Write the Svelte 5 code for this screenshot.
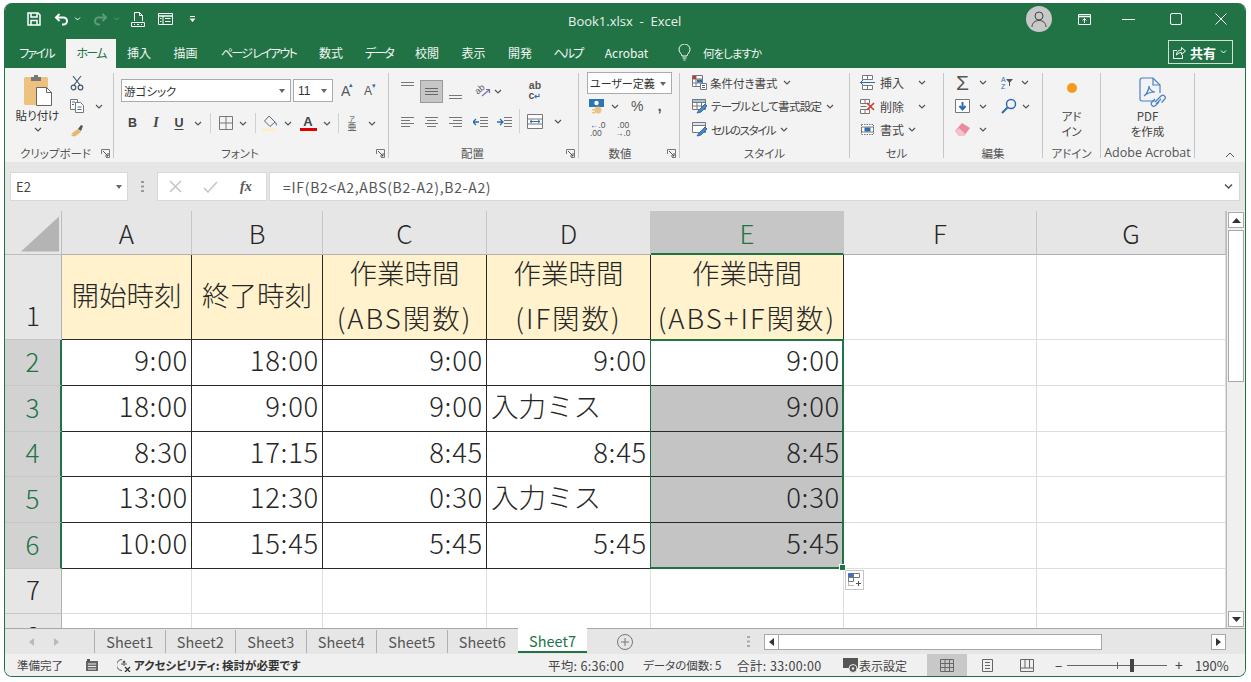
<script>
  const tabs = [
    ['ファイル', 59, true], ['ホーム', 50, true], ['挿入', 46], ['描画', 47], ['ページ レイアウト', 99, true], ['数式', 46],
    ['データ', 50, true], ['校閲', 46], ['表示', 47], ['開発', 46], ['ヘルプ', 50, true], ['Acrobat', 67]
  ];
  const columns = ['A', 'B', 'C', 'D', 'E', 'F', 'G'];
  const rows = [
    ['9:00', '18:00', '9:00', '9:00', '9:00'],
    ['18:00', '9:00', '9:00', '入力ミス', '9:00'],
    ['8:30', '17:15', '8:45', '8:45', '8:45'],
    ['13:00', '12:30', '0:30', '入力ミス', '0:30'],
    ['10:00', '15:45', '5:45', '5:45', '5:45']
  ];
  const sheets = ['Sheet1', 'Sheet2', 'Sheet3', 'Sheet4', 'Sheet5', 'Sheet6', 'Sheet7'];
</script>

{#snippet chev()}
  <svg class="chev" width="8" height="5" viewBox="0 0 8 5"><path d="M1 1l3 3 3-3" fill="none" stroke="#555" stroke-width="1.2"/></svg>
{/snippet}

{#snippet launcher()}
  <svg class="launch" width="9" height="9" viewBox="0 0 9 9"><path d="M.5 5V.5h8v8H5" fill="none" stroke="#777"/><path d="M2 2l5 5M7 4v3H4" fill="none" stroke="#555"/></svg>
{/snippet}

{#snippet lines(kind)}
  <svg width="15" height="11" viewBox="0 0 15 11" fill="none" stroke="#777">
    {#if kind === 'left'}<path d="M1 1.500h13M1 4.500h9M1 7.500h13M1 10.500h9"/>
    {:else if kind === 'center'}<path d="M1 1.500h13M3 4.500h9M1 7.500h13M3 10.500h9"/>
    {:else}<path d="M1 1.500h13M5 4.500h9M1 7.500h13M5 10.500h9"/>{/if}
  </svg>
{/snippet}

<div class="window">
  <header class="titlebar">
    <div class="qat">
      <svg width="14" height="14" viewBox="0 0 14 14" fill="none" stroke="#fff" stroke-width="1.500"><path d="M1 1h10l2 2v10H1z"/><path d="M4 1v4h6V1M4 13V8.500h6V13"/></svg>
      <svg class="undo" width="15" height="13" viewBox="0 0 15 13" fill="none" stroke="#fff" stroke-width="2"><path d="M5.500 1L2 4.500 5.500 8"/><path d="M2 4.500h7.500a3.500 3.500 0 0 1 0 7H8"/></svg>
      <svg class="c1" width="7" height="4" viewBox="0 0 7 4"><path d="M1 .5l2.500 2.500L6 .5" fill="none" stroke="#fff"/></svg>
      <svg class="redo" width="15" height="13" viewBox="0 0 15 13" fill="none" stroke="#5f9a7b" stroke-width="2"><path d="M9.500 1L13 4.500 9.500 8"/><path d="M13 4.500H5.500a3.500 3.500 0 0 0 0 7H7"/></svg>
      <svg class="c2" width="7" height="4" viewBox="0 0 7 4"><path d="M1 .5l2.500 2.500L6 .5" fill="none" stroke="#5f9a7b"/></svg>
      <svg class="prev" width="14" height="15" viewBox="0 0 14 15" fill="none" stroke="#fff"><path d="M3.500 9V.5h5l3 3V9M8.500.5v3h3"/><path d="M.5 10.500h13v4H.5z"/><path d="M3 12.500h1M6 12.500h2M10 12.500h1"/></svg>
      <svg class="form" width="15" height="12" viewBox="0 0 15 12" fill="none" stroke="#fff"><path d="M.5.500h14v11H.5z"/><path d="M.5 3h14" stroke-width="1.500"/><path d="M5 3v8.500M7 5.500h5.500M7 8.500h5.500M2 5.500h1.500M2 8.500h1.500"/></svg>
      <svg class="more" width="7" height="6" viewBox="0 0 7 6" fill="#fff"><path d="M1 0h5v1H1zM.5 2.500h6L3.500 6z"/></svg>
    </div>
    <div class="doc">Book1.xlsx&nbsp; - &nbsp;Excel</div>
    <div class="controls">
      <span class="avatar"><svg width="18" height="18" viewBox="0 0 18 18" fill="none" stroke="#444"><circle cx="9" cy="6" r="4"/><path d="M2 17c0-4 3-6.500 7-6.500s7 2.500 7 6.500"/></svg></span>
      <svg class="rd" width="13" height="11" viewBox="0 0 13 11" fill="none" stroke="#fff"><path d="M.5.500h12v10H.5z"/><path d="M.5 2.500h12" stroke-width="1.500"/><path d="M6.500 9V4.500M4.500 6.500l2-2 2 2"/></svg>
      <svg class="mn" width="13" height="1" viewBox="0 0 13 1"><path d="M0 .5h13" stroke="#fff"/></svg>
      <svg class="mx" width="12" height="12" viewBox="0 0 12 12"><rect x=".5" y=".5" width="11" height="11" rx="1.500" fill="none" stroke="#fff"/></svg>
      <svg class="cl" width="12" height="12" viewBox="0 0 12 12"><path d="M.5.500l11 11M11.500.500l-11 11" stroke="#fff"/></svg>
    </div>
  </header>

  <nav class="tabbar">
    {#each tabs as [name, width, kana], i}
      <span class="tab" class:active={i === 1} class:kana style="width:{width}px">{name}</span>
    {/each}
    <svg class="bulb" width="13" height="17" viewBox="0 0 13 17" fill="none" stroke="#fff"><path d="M4 12c0-2-3-3.500-3-6.500a5.500 5.500 0 0 1 11 0c0 3-3 4.500-3 6.500zM4.500 14h4M5.500 16h2"/></svg>
    <span class="tell">何をしますか</span>
    <button class="share">
      <svg width="13" height="13" viewBox="0 0 13 13" fill="none" stroke="#fff"><path d="M4 4.500H.5v8h9V9"/><path d="M3.500 9c0-3 2-5 5-5V1.500l4 3.500-4 3.500V6.500c-2 0-3.500 1-5 2.500z"/></svg>
      <b>共有</b>
      <svg width="7" height="4" viewBox="0 0 7 4"><path d="M1 .5l2.500 2.500L6 .5" fill="none" stroke="#fff"/></svg>
    </button>
  </nav>

  <section class="ribbon">
    <div class="group g-clip">
      <div class="body clip">
        <div class="paste">
          <svg width="30" height="32" viewBox="0 0 30 32"><rect x="1" y="3" width="24" height="28" rx="1.500" fill="#ecc27e"/><path d="M8 3h10v4H8z" fill="#777"/><path d="M11 1h4v3h-4z" fill="#777"/><path d="M13.500 13.500h10l5 5v13h-15z" fill="#fff" stroke="#666"/><path d="M23.500 13.500v5h5" fill="none" stroke="#666"/></svg>
          <span class="plabel">貼り付け</span>
          {@render chev()}
        </div>
        <div class="clipside">
          <svg width="14" height="16" viewBox="0 0 14 16" fill="none" stroke="#46586c" stroke-width="1.200"><path d="M3 1l7 9M11 1L4 10"/><circle cx="3.500" cy="12.500" r="2.300"/><circle cx="10.500" cy="12.500" r="2.300"/></svg>
          <span class="copyrow">
            <svg width="14" height="14" viewBox="0 0 14 14" fill="#fff" stroke="#777"><path d="M.5.500h7v10h-7z"/><path d="M5.500 3.500h5l3 3v7h-8z"/><path d="M2 3h3M2 5.500h2M7.500 8h4M7.500 10.500h4" stroke="#3f6ea6"/></svg>
            {@render chev()}
          </span>
          <svg width="14" height="14" viewBox="0 0 14 14"><path d="M8 6l3 3-2 1.500-4 3L1 13l2-2-2 .5 3-3z" fill="#e6b96f"/><path d="M8 6l3-4 2 1-2 5z" fill="#555"/></svg>
        </div>
      </div>
      <div class="label"><span>クリップボード</span>{@render launcher()}</div>
    </div>

    <div class="group g-font">
      <div class="body fontbody">
        <div class="frow1">
          <span class="select fname">游ゴシック<i class="dn"></i></span>
          <span class="select fsize">11<i class="dn"></i></span>
          <span class="growa">A<sup>▴</sup></span>
          <span class="growa small">A<sup>▾</sup></span>
        </div>
        <div class="frow2">
          <b class="bt">B</b><b class="bt it">I</b><b class="bt un">U</b>{@render chev()}
          <i class="vd"></i>
          <svg width="14" height="14" viewBox="0 0 14 14" fill="none" stroke="#777"><path d="M.5.500h13v13H.5zM7 .5v13M.5 7h13"/></svg>{@render chev()}
          <i class="vd"></i>
          <svg width="16" height="16" viewBox="0 0 16 16" fill="none"><path d="M7 1l6 6-5 4.500L2.500 6z" stroke="#666"/><path d="M13 7c1 1.500 2 2.500 1.500 3.500" stroke="#5a8fc2" stroke-width="1.300"/><path d="M0 13.500h15v2.500H0z" fill="#fdeec6"/></svg>{@render chev()}
          <span class="fontcolor">A</span>{@render chev()}
          <i class="vd"></i>
          <span class="zhu"><small>ア</small><span>亜</span></span>{@render chev()}
        </div>
      </div>
      <div class="label"><span>フォント</span>{@render launcher()}</div>
    </div>

    <div class="group g-align">
      <div class="body alignbody">
        <div class="arow1">
          <svg width="15" height="6" viewBox="0 0 15 6" class="at"><path d="M1 .5h13M1 3.500h13" stroke="#777"/></svg>
          <span class="pressed"><svg width="15" height="9" viewBox="0 0 15 9"><path d="M1 1.500h13M1 4.500h13M1 7.500h13" stroke="#666"/></svg></span>
          <svg width="15" height="6" viewBox="0 0 15 6" class="ab"><path d="M1 1.500h13M1 4.500h13" stroke="#777"/></svg>
          <span></span>
          <span class="orient"><span class="tilt">ab</span><svg width="15" height="14" viewBox="0 0 15 14" fill="none"><path d="M6 12l7-6M10 5.500h3.500V9" stroke="#7a68b5" stroke-width="1.200"/></svg></span>
          {@render chev()}
          <span></span>
          <span class="wrap"><span>ab</span><span>c<em>↵</em></span></span>
        </div>
        <div class="arow2">
          {@render lines('left')}{@render lines('center')}{@render lines('right')}
          <svg width="15" height="11" viewBox="0 0 15 11" fill="none"><path d="M7 1.500h8M7 4.500h8M7 7.500h8M7 10.500h8" stroke="#777"/><path d="M6 6H0M3 3L0 6l3 3" stroke="#2d6cb0" stroke-width="1.300"/></svg>
          <svg width="15" height="11" viewBox="0 0 15 11" fill="none"><path d="M7 1.500h8M7 4.500h8M7 7.500h8M7 10.500h8" stroke="#777"/><path d="M0 6h6M3 3l3 3-3 3" stroke="#2d6cb0" stroke-width="1.300"/></svg>
          <i class="vd tall"></i>
          <svg width="16" height="15" viewBox="0 0 16 15" fill="#fff" stroke="#777"><path d="M.5.500h15v14H.5z"/><path d="M.5 5h15M.5 10h15" /><path d="M3 7.500h10M5 5.800L3 7.500l2 1.700M11 5.800l2 1.700-2 1.700" stroke="#2d6cb0" fill="none"/></svg>
          {@render chev()}
        </div>
      </div>
      <div class="label"><span>配置</span>{@render launcher()}</div>
    </div>

    <div class="group g-num">
      <div class="body numbody">
        <span class="select numsel">ユーザー定義<i class="dn"></i></span>
        <div class="nrow">
          <svg width="17" height="15" viewBox="0 0 17 15"><path d="M0 0h15v8H0z" fill="#2e75b6"/><circle cx="7.500" cy="4" r="2.200" fill="#fff"/><circle cx="9" cy="11" r="3.500" fill="#ecc27e"/><path d="M3 10h3v1.500H3zM3 13h3v1.500H3z" fill="#ecc27e"/></svg>
          {@render chev()}
          <span class="pct">%</span>
          <b class="comma">,</b>
        </div>
        <div class="nrow2">
          <span class="dec"><em>←</em>.0<br/>.00</span>
          <span class="dec">&nbsp;.00<br/><em>→</em>.0</span>
        </div>
      </div>
      <div class="label"><span>数値</span>{@render launcher()}</div>
    </div>

    <div class="group g-style">
      <div class="body stack">
        <div class="line">
          <svg width="15" height="15" viewBox="0 0 15 15" fill="#fff" stroke="#777"><path d="M.5.500h10v11H.5zM.5 4h10M.5 8h10M4 .5v11"/><path d="M1 1h3v3H1z" fill="#c0392b" stroke="none"/><path d="M5 4.500h5v3H5z" fill="#2d6cb0" stroke="none"/><path d="M8.500 8.500h6v6h-6z"/><path d="M10 10.500h3M10 12.500h3" stroke="#2d6cb0"/></svg>
          <span>条件付き書式</span>{@render chev()}
        </div>
        <div class="line">
          <svg width="16" height="15" viewBox="0 0 16 15" fill="#fff" stroke="#777"><path d="M.5.500h13v10H.5zM.5 3.500h13M.5 7h13M5 3.500v7M9.500 3.500v7"/><path d="M.5.500h13v3H.5z" fill="#9dc3e6" stroke="#777"/><path d="M5 14l2-3 6-6 2 2-6 6z" fill="#4a8acb" stroke="#2d6cb0"/></svg>
          <span class="t1">テーブルとして書式設定</span>{@render chev()}
        </div>
        <div class="line">
          <svg width="16" height="15" viewBox="0 0 16 15" fill="#fff" stroke="#777"><path d="M.5.500h13v10H.5z"/><path d="M.5.500h13v3H.5z" fill="#d9e5f3"/><path d="M5 14l2-3 6-6 2 2-6 6z" fill="#4a8acb" stroke="#2d6cb0"/></svg>
          <span class="t2">セルのスタイル</span>{@render chev()}
        </div>
      </div>
      <div class="label center"><span>スタイル</span></div>
    </div>

    <div class="group g-cell">
      <div class="body stack">
        <div class="line">
          <svg width="15" height="15" viewBox="0 0 15 15" fill="#fff" stroke="#777"><path d="M2.500.5h10v4h-10zM2.500 10.500h10v4h-10zM7.500.5v4M7.500 10.500v4"/><path d="M6 7.500h9" stroke="#2d6cb0"/><path d="M0 7.500h6M3 5L.5 7.500 3 10" stroke="#2d6cb0" fill="none"/></svg>
          <span>挿入</span><span class="push">{@render chev()}</span>
        </div>
        <div class="line">
          <svg width="15" height="15" viewBox="0 0 15 15" fill="#fff" stroke="#777"><path d="M.5.500h9v4h-9zM.5 10.500h9v4h-9zM5 .5v4M5 10.500v4M.5 7.500h6"/><path d="M7 4l7 7M14 4l-7 7" stroke="#d1382c" stroke-width="1.600"/></svg>
          <span>削除</span><span class="push">{@render chev()}</span>
        </div>
        <div class="line">
          <svg width="15" height="15" viewBox="0 0 15 15" fill="#fff" stroke="#777"><path d="M1.500 2.500h12v10h-12z" stroke-dasharray="1.500 1"/><path d="M1.500 5h12v5h-12z" /><path d="M4.500 5.500h6v4h-6z" fill="#2d6cb0" stroke="none"/></svg>
          <span>書式</span>{@render chev()}
        </div>
      </div>
      <div class="label center"><span>セル</span></div>
    </div>

    <div class="group g-edit">
      <div class="body editbody">
        <div class="erow">
          <span class="sigma">Σ</span>{@render chev()}
          <span class="sort"><small>A<br/>Z</small><svg width="7" height="7" viewBox="0 0 7 7"><path d="M0 0h7L4 3.500V7H3V3.500z" fill="#555"/></svg></span>{@render chev()}
        </div>
        <div class="erow">
          <svg width="15" height="14" viewBox="0 0 15 14"><path d="M.5.500h14v13H.5z" fill="#fff" stroke="#777"/><path d="M7.500 3v7M4.500 7l3 3.500 3-3.500" fill="none" stroke="#2d6cb0" stroke-width="2"/></svg>{@render chev()}
          <svg class="lens" width="16" height="16" viewBox="0 0 16 16" fill="none" stroke="#2d6cb0" stroke-width="1.500"><circle cx="10" cy="6" r="4.500"/><path d="M6.500 9.500L1 15" stroke-width="2"/></svg>{@render chev()}
        </div>
        <div class="erow">
          <svg width="15" height="13" viewBox="0 0 15 13"><path d="M0 8l7-8 8 5-6 8H4z" fill="#e98b9c"/><path d="M0 8l4 5h5l1.500-2L4 5z" fill="#f5c1cb"/></svg>{@render chev()}
        </div>
      </div>
      <div class="label center"><span>編集</span></div>
    </div>

    <div class="group g-addin">
      <div class="body big">
        <svg class="dot" width="12" height="12" viewBox="0 0 12 12"><circle cx="6" cy="6" r="5" fill="#f59a1f"/></svg>
        <span class="bigt">アド<br/>イン</span>
      </div>
      <div class="label center"><span>アドイン</span></div>
    </div>

    <div class="group g-acro">
      <div class="body big">
        <svg class="pdf" width="28" height="33" viewBox="0 0 28 33" fill="none" stroke="#4a7fc9" stroke-width="1.200"><path d="M17 24H4a2 2 0 0 1-2-2V3a2 2 0 0 1 2-2h11l7 7v8"/><path d="M15 1v7h7"/><path d="M6 19c3-2 5-7 5-10 0 3 3 6 6 6-3 0-8 1-11 4z"/><path d="M17 25l6-6a2.400 2.400 0 0 1 3.500 3.500l-3 3M21 25l-3.500 3.500A2.400 2.400 0 0 1 14 25l3-3M18 27l5-5"/></svg>
        <span class="bigt">PDF<br/>を作成</span>
      </div>
      <div class="label center"><span class="acro">Adobe Acrobat</span></div>
    </div>

    <div class="collapse">
      <svg width="10" height="6" viewBox="0 0 10 6"><path d="M1 5l4-4 4 4" fill="none" stroke="#555"/></svg>
    </div>
  </section>

  <section class="formula">
    <div class="namebox"><span>E2</span><i class="dn"></i></div>
    <svg class="grip" width="3" height="11" viewBox="0 0 3 11" fill="#999"><path d="M0 0h3v2H0zM0 4.500h3v2H0zM0 9h3v2H0z"/></svg>
    <div class="fxbox">
      <svg width="13" height="13" viewBox="0 0 13 13"><path d="M1 1l11 11M12 1L1 12" stroke="#c4c4c4" stroke-width="1.500"/></svg>
      <svg width="15" height="12" viewBox="0 0 15 12"><path d="M1 7l4 4 9-10" fill="none" stroke="#c4c4c4" stroke-width="1.500"/></svg>
      <span class="fx">fx</span>
    </div>
    <div class="fbar">
      <span>=IF(B2&lt;A2,ABS(B2-A2),B2-A2)</span>
      <svg width="9" height="5" viewBox="0 0 9 5"><path d="M1 .5l3.500 3.500L8 .5" fill="none" stroke="#555" stroke-width="1.500"/></svg>
    </div>
  </section>

  <main class="sheetarea">
    <div class="sheet">
      <div class="grid">
        <div class="corner"><svg width="41" height="38" viewBox="0 0 41 38"><path d="M41 0v38H0z" fill="#b4b4b4"/></svg></div>
        {#each columns as col, c}
          <div class="colhead" class:sel={c === 4}>{col}</div>
        {/each}

        <div class="rowhead r1">1</div>
        <div class="cell head">開始時刻</div>
        <div class="cell head">終了時刻</div>
        <div class="cell head two"><span>作業時間</span><span class="sub">(ABS関数)</span></div>
        <div class="cell head two"><span>作業時間</span><span class="sub">(IF関数)</span></div>
        <div class="cell head two"><span>作業時間</span><span class="sub">(ABS+IF関数)</span></div>
        <div class="cell"></div>
        <div class="cell"></div>

        {#each rows as row, r}
          <div class="rowhead sel">{r + 2}</div>
          {#each row as value, c}
            <div class="cell table" class:text={value === '入力ミス'} class:filled={c === 4 && r > 0}>{value}</div>
          {/each}
          <div class="cell"></div>
          <div class="cell"></div>
        {/each}

        {#each [7, 8] as n}
          <div class="rowhead">{n}</div>
          {#each columns as col}
            <div class="cell"></div>
          {/each}
        {/each}
      </div>
      <div class="selection"><i class="handle"></i></div>
      <div class="autofill">
        <svg width="14" height="14" viewBox="0 0 14 14" fill="none" stroke="#777"><path d="M.5.500h5v4h-5z" fill="#3f72c4" stroke="#3f72c4"/><path d="M5.500.5h6v4h-6zM.5 4.500h5v4h-5z"/><path d="M.5 8.500v4h6" stroke-dasharray="1 1"/><path d="M10.500 8v5M8 10.500h5" stroke="#555"/></svg>
      </div>
    </div>
    <div class="vscroll">
      <span class="sbtn"><svg width="9" height="5" viewBox="0 0 9 5"><path d="M0 5l4.500-5L9 5z" fill="#333"/></svg></span>
      <span class="vthumb"></span>
      <span class="sbtn end"><svg width="9" height="5" viewBox="0 0 9 5"><path d="M0 0l4.500 5L9 0z" fill="#333"/></svg></span>
    </div>
  </main>

  <section class="sheetbar">
    <div class="nav">
      <svg width="5" height="8" viewBox="0 0 5 8"><path d="M5 0L0 4l5 4z" fill="#b9b9b9"/></svg>
      <svg width="5" height="8" viewBox="0 0 5 8"><path d="M0 0l5 4-5 4z" fill="#b9b9b9"/></svg>
    </div>
    <div class="sheets">
      {#each sheets as s, i}
        <span class="stab" class:current={i === 6}>{s}</span>
      {/each}
    </div>
    <svg class="plus" width="16" height="16" viewBox="0 0 16 16" fill="none" stroke="#777"><circle cx="8" cy="8" r="7.500"/><path d="M8 4v8M4 8h8"/></svg>
    <svg class="grip2" width="3" height="11" viewBox="0 0 3 11" fill="#aaa"><path d="M0 0h3v2H0zM0 4.500h3v2H0zM0 9h3v2H0z"/></svg>
    <div class="hscroll">
      <span class="hbtn"><svg width="5" height="8" viewBox="0 0 5 8"><path d="M5 0L0 4l5 4z" fill="#333"/></svg></span>
      <span class="hthumb"></span>
      <span class="hbtn last"><svg width="5" height="8" viewBox="0 0 5 8"><path d="M0 0l5 4-5 4z" fill="#333"/></svg></span>
    </div>
  </section>

  <footer class="status">
    <span class="ready">準備完了</span>
    <svg class="macro" width="12" height="12" viewBox="0 0 12 12"><path d="M0 2h12v10H0z" fill="#666"/><path d="M2 4.500h8v1H2zM2 7h8v1H2zM2 9.500h8v1H2z" fill="#eee"/><path d="M1 0h3v3H1z" fill="#555"/></svg>
    <svg class="acc" width="14" height="14" viewBox="0 0 14 14" fill="none" stroke="#555"><path d="M5 1.500a5.500 5.500 0 0 0 0 11"/><circle cx="7" cy="4" r="1" fill="#555"/><path d="M4 6h6M7 6v2"/><path d="M8 9l5 5M13 9l-5 5" stroke="#333" stroke-width="1.300"/></svg>
    <b class="acctext">アクセシビリティ: 検討が必要です</b>
    <span class="avg">平均: 6:36:00</span>
    <span class="cnt">データの個数: 5</span>
    <span class="sum">合計: 33:00:00</span>
    <svg class="disp" width="16" height="15" viewBox="0 0 16 15"><path d="M0 0h15v10H0z" fill="#555"/><circle cx="10" cy="10.500" r="4" fill="#555" stroke="#eee"/><circle cx="10" cy="10.500" r="1.200" fill="#eee"/></svg>
    <span class="disptext">表示設定</span>
    <span class="view on"><svg width="14" height="13" viewBox="0 0 14 13" fill="none" stroke="#666"><path d="M.5.500h13v12H.5zM5 .5v12M9.500.5v12M.5 4.500h13M.5 8.500h13"/></svg></span>
    <span class="view"><svg width="11" height="13" viewBox="0 0 11 13" fill="none" stroke="#666"><path d="M.5.500h10v12H.5zM3 3.500h5M3 6.500h5M3 9.500h5"/></svg></span>
    <span class="view"><svg width="14" height="13" viewBox="0 0 14 13" fill="none" stroke="#666"><path d="M.5.500h13v12H.5zM.5 9h13M5 .5V9M9.500.5V9"/></svg></span>
    <span class="zminus">−</span>
    <span class="slider"><i class="mid"></i><i class="thumb"></i></span>
    <span class="zplus">+</span>
    <span class="pctz">190%</span>
  </footer>
</div>

<style>
  :global(body) { margin: 0; background: #fff; }
  .window {
    box-sizing: border-box;
    width: 1242px;
    height: 674px;
    margin: 3px 0 0 4px;
    border: 1px solid #217346;
    border-top: 0;
    border-radius: 8px;
    overflow: hidden;
    display: flex;
    flex-direction: column;
    background: #f3f3f3;
    color: #444;
    font-family: "Noto Sans CJK JP", "Liberation Sans", sans-serif;
    font-feature-settings: "palt";
    font-size: 12px;
  }
  svg { display: block; flex: none; }
  i, em { font-style: normal; }

  /* title */
  .titlebar { height: 32px; flex: none; background: #217346; display: flex; align-items: center; color: #fff; position: relative; }
  .qat { display: flex; align-items: center; padding-left: 22px; }
  .undo { margin-left: 13px; }
  .c1 { margin-left: 5px; }
  .redo { margin-left: 12px; }
  .c2 { margin-left: 5px; }
  .prev { margin-left: 11px; }
  .form { margin-left: 13px; }
  .more { margin-left: 16px; }
  .doc { position: absolute; left: 563px; top: 0; line-height: 36px; font-size: 13px; color: #e9f1ec; font-family: "Open Sans", sans-serif; white-space: nowrap; }
  .controls { margin-left: auto; display: flex; align-items: center; padding-right: 18px; }
  .avatar { width: 26px; height: 26px; border-radius: 50%; background: #c8c8c8; display: flex; align-items: center; justify-content: center; }
  .rd { margin-left: 26px; }
  .mn { margin-left: 31px; }
  .mx { margin-left: 35px; }
  .cl { margin-left: 33px; }

  /* tabs */
  .tabbar { height: 33px; flex: none; background: #217346; display: flex; align-items: flex-end; color: #fff; padding-left: 2px; position: relative; }
  .tab { height: 29px; line-height: 28px; text-align: center; white-space: nowrap; color: #f1f6f3; font-size: 12px; }
  .tab.kana { letter-spacing: -1.700px; }
  .tab.active { background: #f3f3f3; color: #217346; }
  .bulb { margin: 0 0 7px 18px; }
  .tell { margin-left: 12px; height: 29px; line-height: 28px; color: #f1f6f3; font-size: 11.500px; letter-spacing: -1px; }
  .share { box-sizing: border-box; margin: 0 12px 4px auto; width: 65px; height: 24px; border: 1px solid #cfe0d6; background: transparent; color: #fff; font: inherit; font-size: 13px; display: flex; align-items: center; gap: 4px; padding: 0 0 0 4px; }

  /* ribbon */
  .ribbon { height: 94px; flex: none; display: flex; padding: 5px 0 0 1px; box-sizing: border-box; background: #f3f3f3; }
  .group { box-sizing: border-box; display: flex; flex-direction: column; border-right: 1px solid #c6c6c6; height: 85px; position: relative; }
  .body { flex: 1; min-height: 0; position: relative; }
  .label { height: 17px; margin-bottom: -3px; display: flex; align-items: center; justify-content: center; font-size: 11.500px; color: #555; position: relative; white-space: nowrap; }
  .launch { position: absolute; right: 3px; top: 5px; }
  .chev { flex: none; }
  .g-clip { width: 108px; }
  .g-clip .label { padding-right: 8px; }
  .g-font { width: 275px; }
  .g-font .label { padding-right: 22px; }
  .g-align { width: 190px; }
  .g-align .label { padding-right: 22px; }
  .g-num { width: 101px; }
  .g-num .label { padding-right: 18px; }
  .g-style { width: 170px; }
  .g-cell { width: 94px; }
  .g-edit { width: 99px; }
  .g-addin { width: 58px; }
  .g-acro { width: 94px; }

  .clip { display: flex; }
  .paste { width: 57px; display: flex; flex-direction: column; align-items: center; padding: 1px 0 0 3px; }
  .plabel { font-size: 11.500px; line-height: 15px; margin: 2px 0 4px; white-space: nowrap; color: #333; }
  .clipside { display: flex; flex-direction: column; gap: 8px; padding: 2px 0 0 4px; }
  .copyrow { display: flex; align-items: center; gap: 12px; }
  .copyrow .chev { margin-left: -1px; }
  .clipside > svg:last-child { margin-top: 2px; }

  .fontbody { padding: 6px 0 0 7px; }
  .frow1 { display: flex; align-items: center; }
  .select { box-sizing: border-box; display: flex; align-items: center; background: #fff; border: 1px solid #ababab; height: 23px; padding-left: 2px; color: #333; position: relative; white-space: nowrap; }
  .dn { position: absolute; right: 5px; top: 9px; border: 3px solid transparent; border-top: 4px solid #666; border-bottom: 0; }
  .fname { width: 170px; font-size: 11.500px; }
  .fsize { width: 40px; margin-left: 2px; font-size: 12px; padding-left: 4px; font-family: "Liberation Sans", sans-serif; }
  .growa { width: 14px; margin-left: 8px; font-size: 14px; line-height: 1; color: #555; position: relative; font-family: "Liberation Sans", sans-serif; }
  .growa.small { margin-left: 9px; font-size: 12px; }
  .growa sup { font-size: 7px; color: #2d6cb0; position: absolute; top: -3px; left: 8px; }
  .frow2 { margin-top: 10px; display: grid; grid-template-columns: 23px 24px 22px 15px 10px 21px 14px 10px 20px 16px 24px 14px 8px 20px 20px; place-items: center; height: 22px; width: max-content; }
  .bt { font-family: "Liberation Sans", sans-serif; font-size: 12.500px; color: #444; }
  .it { font-family: "Liberation Serif", serif; font-style: italic; font-size: 14px; }
  .un { text-decoration: underline; text-underline-offset: 2px; }
  .vd { display: block; width: 1px; height: 20px; background: #d0d0d0; }
  .fontcolor { font-family: "Liberation Sans", sans-serif; font-weight: 700; font-size: 13px; line-height: 13px; color: #444; border-bottom: 3px solid #e00000; width: 17px; text-align: center; }
  .zhu { display: flex; flex-direction: column; align-items: center; font-size: 9px; line-height: 9px; }
  .zhu small { font-size: 6px; line-height: 7px; }

  .alignbody { padding: 6px 0 0 8px; }
  .arow1 { display: grid; grid-template-columns: 20px 28px 20px 7px 22px 8px 18px 30px; align-items: center; justify-items: center; height: 24px; width: max-content; }
  .at { align-self: start; margin-top: 3px; }
  .ab { align-self: end; margin-bottom: 3px; }
  .pressed { box-sizing: border-box; width: 23px; height: 23px; background: #c6c6c6; border: 1px solid #9a9a9a; display: flex; align-items: center; justify-content: center; }
  .orient { width: 18px; height: 16px; display: grid; place-items: center; }
  .orient > * { grid-area: 1 / 1; }
  .tilt { font: 9px/9px "Liberation Sans", sans-serif; color: #555; transform: translate(-3px, -2px) rotate(-40deg); }
  .wrap { font-size: 10.500px; line-height: 10px; font-family: "Liberation Sans", sans-serif; font-weight: 700; color: #555; display: flex; flex-direction: column; align-items: center; }
  .wrap em { color: #2d6cb0; font-size: 8px; }
  .arow2 { margin-top: 6px; display: grid; grid-template-columns: 20px 28px 20px 30px 18px 12px 20px 26px; align-items: center; justify-items: center; height: 24px; width: max-content; }
  .tall { height: 24px; }

  .numbody { padding: 0 0 0 8px; }
  .numsel { width: 85px; height: 22px; font-size: 11px; margin-top: -1px; padding-left: 2px; }
  .nrow { display: flex; align-items: center; height: 22px; margin-top: 1px; padding-left: 2px; }
  .nrow .chev { margin-left: 5px; }
  .pct { margin-left: 12px; font-size: 14px; font-family: "Liberation Sans", sans-serif; color: #555; }
  .comma { margin-left: 14px; font-size: 15px; line-height: 12px; color: #555; font-family: "Liberation Sans", sans-serif; }
  .nrow2 { display: flex; gap: 10px; padding: 4px 0 0 3px; }
  .dec { font: 8.500px/8px "Liberation Sans", sans-serif; width: 15px; color: #555; white-space: nowrap; }
  .dec em { color: #2d6cb0; }

  .stack { display: flex; flex-direction: column; padding: 0 0 0 12px; margin-top: -2px; }
  .g-cell .stack { padding-left: 10px; }
  .line { display: flex; align-items: center; height: 23.500px; gap: 3px; font-size: 11.500px; white-space: nowrap; color: #444; }
  .line .chev { margin-left: 2px; }
  .t1 { letter-spacing: -.7px; }
  .t2 { letter-spacing: -1.400px; }
  .g-cell .line { gap: 5px; font-size: 12px; }
  .g-cell .line .chev { margin-left: -1px; }
  .push { margin-left: 10px; }

  .editbody { padding: 0 0 0 11px; margin-top: -2px; }
  .erow { display: flex; align-items: center; height: 23.500px; gap: 8px; }
  .sigma { width: 15px; font: 400 21px/20px "Liberation Sans", sans-serif; color: #555; text-align: center; }
  .erow > .chev:nth-child(2) { margin-left: 1px; }
  .sort { display: flex; align-items: center; margin-left: 6px; color: #2d6cb0; }
  .sort small { font: 7px/7px "Liberation Sans", sans-serif; }
  .lens { margin-left: 6px; }
  .lens + .chev { margin-left: -3px; }
  .big { display: flex; flex-direction: column; align-items: center; }
  .bigt { text-align: center; font-size: 11.500px; line-height: 15px; position: absolute; top: 36px; left: 0; right: 0; color: #444; }
  .dot { margin-top: 9px; }
  .pdf { margin: 4px 0 0 8px; }
  .acro { font-family: "Open Sans", "Liberation Sans", sans-serif; font-size: 12.500px; }
  .collapse { margin-left: auto; align-self: flex-end; padding: 0 10px 4px 0; }

  /* formula bar */
  .formula { height: 49px; flex: none; background: #e6e6e6; display: flex; align-items: flex-start; padding: 10px 5px 0 5px; box-sizing: border-box; }
  .namebox, .fxbox, .fbar { box-sizing: border-box; height: 29px; background: #fff; border: 1px solid #d8d8d8; display: flex; align-items: center; position: relative; }
  .namebox { width: 118px; padding-left: 5px; font-size: 13px; color: #444; }
  .namebox .dn { top: 12px; right: 5px; }
  .grip { margin: 9px 0 0 13px; }
  .fxbox { width: 110px; margin-left: 13px; padding-left: 11px; gap: 21px; }
  .fx { font: italic 700 14px "Liberation Serif", serif; color: #555; margin-left: 1px; }
  .fbar { flex: 1; margin-left: 2px; padding: 0 6px 0 13px; justify-content: space-between; font-size: 14px; color: #555; letter-spacing: .7px; }

  /* sheet */
  .sheetarea { height: 417px; flex: none; display: flex; background: #fff; }
  .sheet { width: 1221px; position: relative; overflow: hidden; }
  .grid { display: grid; font-feature-settings: normal; grid-template-columns: 57px 130px 131px 164px 164px 193px 193px 189px; grid-template-rows: 44px 85px 46px 46px 45px 46px 46px 45px 46px; font-size: 26px; color: #262626; line-height: 1; font-weight: 300; }
  .corner { background: #e6e6e6; border-right: 1px solid #bdbdbd; border-bottom: 1px solid #bdbdbd; display: flex; align-items: flex-end; justify-content: flex-end; box-sizing: border-box; padding: 0 2px 2px 0; }
  .corner svg { width: 38px; height: 36px; }
  .colhead { box-sizing: border-box; background: #e6e6e6; border-right: 1px solid #c6c6c6; border-bottom: 1px solid #b0b0b0; display: flex; align-items: center; justify-content: center; padding-top: 1px; }
  .colhead.sel { background: #c6c6c6; color: #217346; border-bottom: 2px solid #217346; }
  .rowhead { box-sizing: border-box; background: #e6e6e6; border-right: 1px solid #b0b0b0; border-bottom: 1px solid #c6c6c6; display: flex; align-items: center; justify-content: center; padding-bottom: 4px; }
  .rowhead.r1 { align-items: flex-end; padding-bottom: 11px; }
  .rowhead.sel { background: #d2d2d2; color: #217346; border-right: 2px solid #217346; }
  .cell { box-sizing: border-box; border-right: 1px solid #dedede; border-bottom: 1px solid #dedede; display: flex; align-items: center; justify-content: flex-end; padding: 0 3px 5px 0; font-size: 27.500px; letter-spacing: .7px; white-space: nowrap; }
  .head { background: #fff2cc; border-right: 1px solid #2a2a2a; border-bottom: 1px solid #2a2a2a; justify-content: center; padding: 0 0 5px; text-align: center; letter-spacing: 0; }
  .two { flex-direction: column; gap: 11px; line-height: 34px; padding: 0 0 6px; }
  .sub { letter-spacing: 2px; }
  .table { border-right: 1px solid #2a2a2a; border-bottom: 1px solid #2a2a2a; }
  .text { justify-content: flex-start; padding: 0 0 5px 4px; letter-spacing: 0; }
  .filled { background: #c4c4c4; }
  .selection { position: absolute; left: 645px; top: 128px; width: 194px; height: 230px; box-sizing: border-box; border: 2px solid #217346; border-left-width: 1px; pointer-events: none; }
  .handle { position: absolute; right: -4px; bottom: -4px; width: 5px; height: 5px; background: #217346; border: 1px solid #fff; }
  .autofill { position: absolute; left: 840px; top: 359px; box-sizing: border-box; width: 19px; height: 20px; background: #fff; border: 1px solid #c6c6c6; display: flex; align-items: center; justify-content: center; }
  .vscroll { flex: 1; background: #f0f0f0; display: flex; flex-direction: column; padding: 0 1px; border-left: 1px solid #bbb; }
  .sbtn { box-sizing: border-box; height: 16px; background: #fff; border: 1px solid #a8a8a8; display: flex; align-items: center; justify-content: center; margin-top: 1px; flex: none; }
  .sbtn.end { margin-top: auto; margin-bottom: 1px; }
  .vthumb { box-sizing: border-box; height: 152px; margin-top: 2px; background: #fff; border: 1px solid #a8a8a8; }

  /* sheet tabs */
  .sheetbar { height: 26px; flex: none; background: #e6e6e6; border-top: 1px solid #a8a8a8; box-sizing: border-box; display: flex; align-items: center; position: relative; }
  .nav { display: flex; gap: 20px; padding-left: 24px; width: 65px; box-sizing: border-box; }
  .sheets { display: flex; align-self: stretch; margin-left: 24px; }
  .stab { box-sizing: border-box; width: 70.500px; height: 23px; margin-top: 1px; text-align: center; line-height: 23px; font-size: 14.500px; color: #555; position: relative; border-left: 1px solid #b0b0b0; }
  .stab.current { background: #fff; color: #217346; border-bottom: 2px solid #217346; border-left: 0; margin-left: 1px; width: 69px; height: 25px; margin-top: -1px; line-height: 25px; }
  .plus { margin-left: 30px; }
  .grip2 { margin-left: 114px; }
  .hscroll { position: absolute; left: 759px; top: 5px; width: 462px; height: 16px; display: flex; }
  .hbtn { box-sizing: border-box; width: 15px; height: 16px; background: #fff; border: 1px solid #a8a8a8; display: flex; align-items: center; justify-content: center; flex: none; }
  .hbtn.last { margin-left: auto; }
  .hthumb { box-sizing: border-box; width: 323px; background: #fff; border: 1px solid #a8a8a8; border-left: 0; }

  /* status */
  .status { flex: 1; min-height: 0; background: #f0f0f0; display: flex; align-items: center; position: relative; font-size: 11.500px; color: #444; white-space: nowrap; }
  .ready { margin-left: 12px; width: 36px; }
  .macro { margin-left: 33px; }
  .acc { margin-left: 19px; }
  .acctext { margin-left: 3px; font-size: 11.500px; color: #333; width: 414px; }
  .avg { width: 95px; font-size: 12.500px; letter-spacing: .3px; }
  .cnt { width: 94px; }
  .sum { width: 106px; font-size: 12.500px; letter-spacing: .4px; }
  .disp { margin-right: 0; }
  .disptext { width: 68px; font-size: 12px; }
  .view { width: 40px; align-self: stretch; display: flex; align-items: center; justify-content: center; }
  .view.on { background: #c8c8c8; }
  .zminus { margin-left: 8px; width: 12px; font-size: 13px; }
  .slider { position: relative; width: 100px; height: 1px; background: #666; }
  .mid { position: absolute; left: 50px; top: -3px; width: 1px; height: 7px; background: #666; }
  .thumb { position: absolute; left: 63px; top: -6px; width: 4px; height: 13px; background: #444; }
  .zplus { margin-left: 8px; width: 19px; font-size: 14px; }
  .pctz { font-size: 13px; margin-left: 1px; }
</style>
